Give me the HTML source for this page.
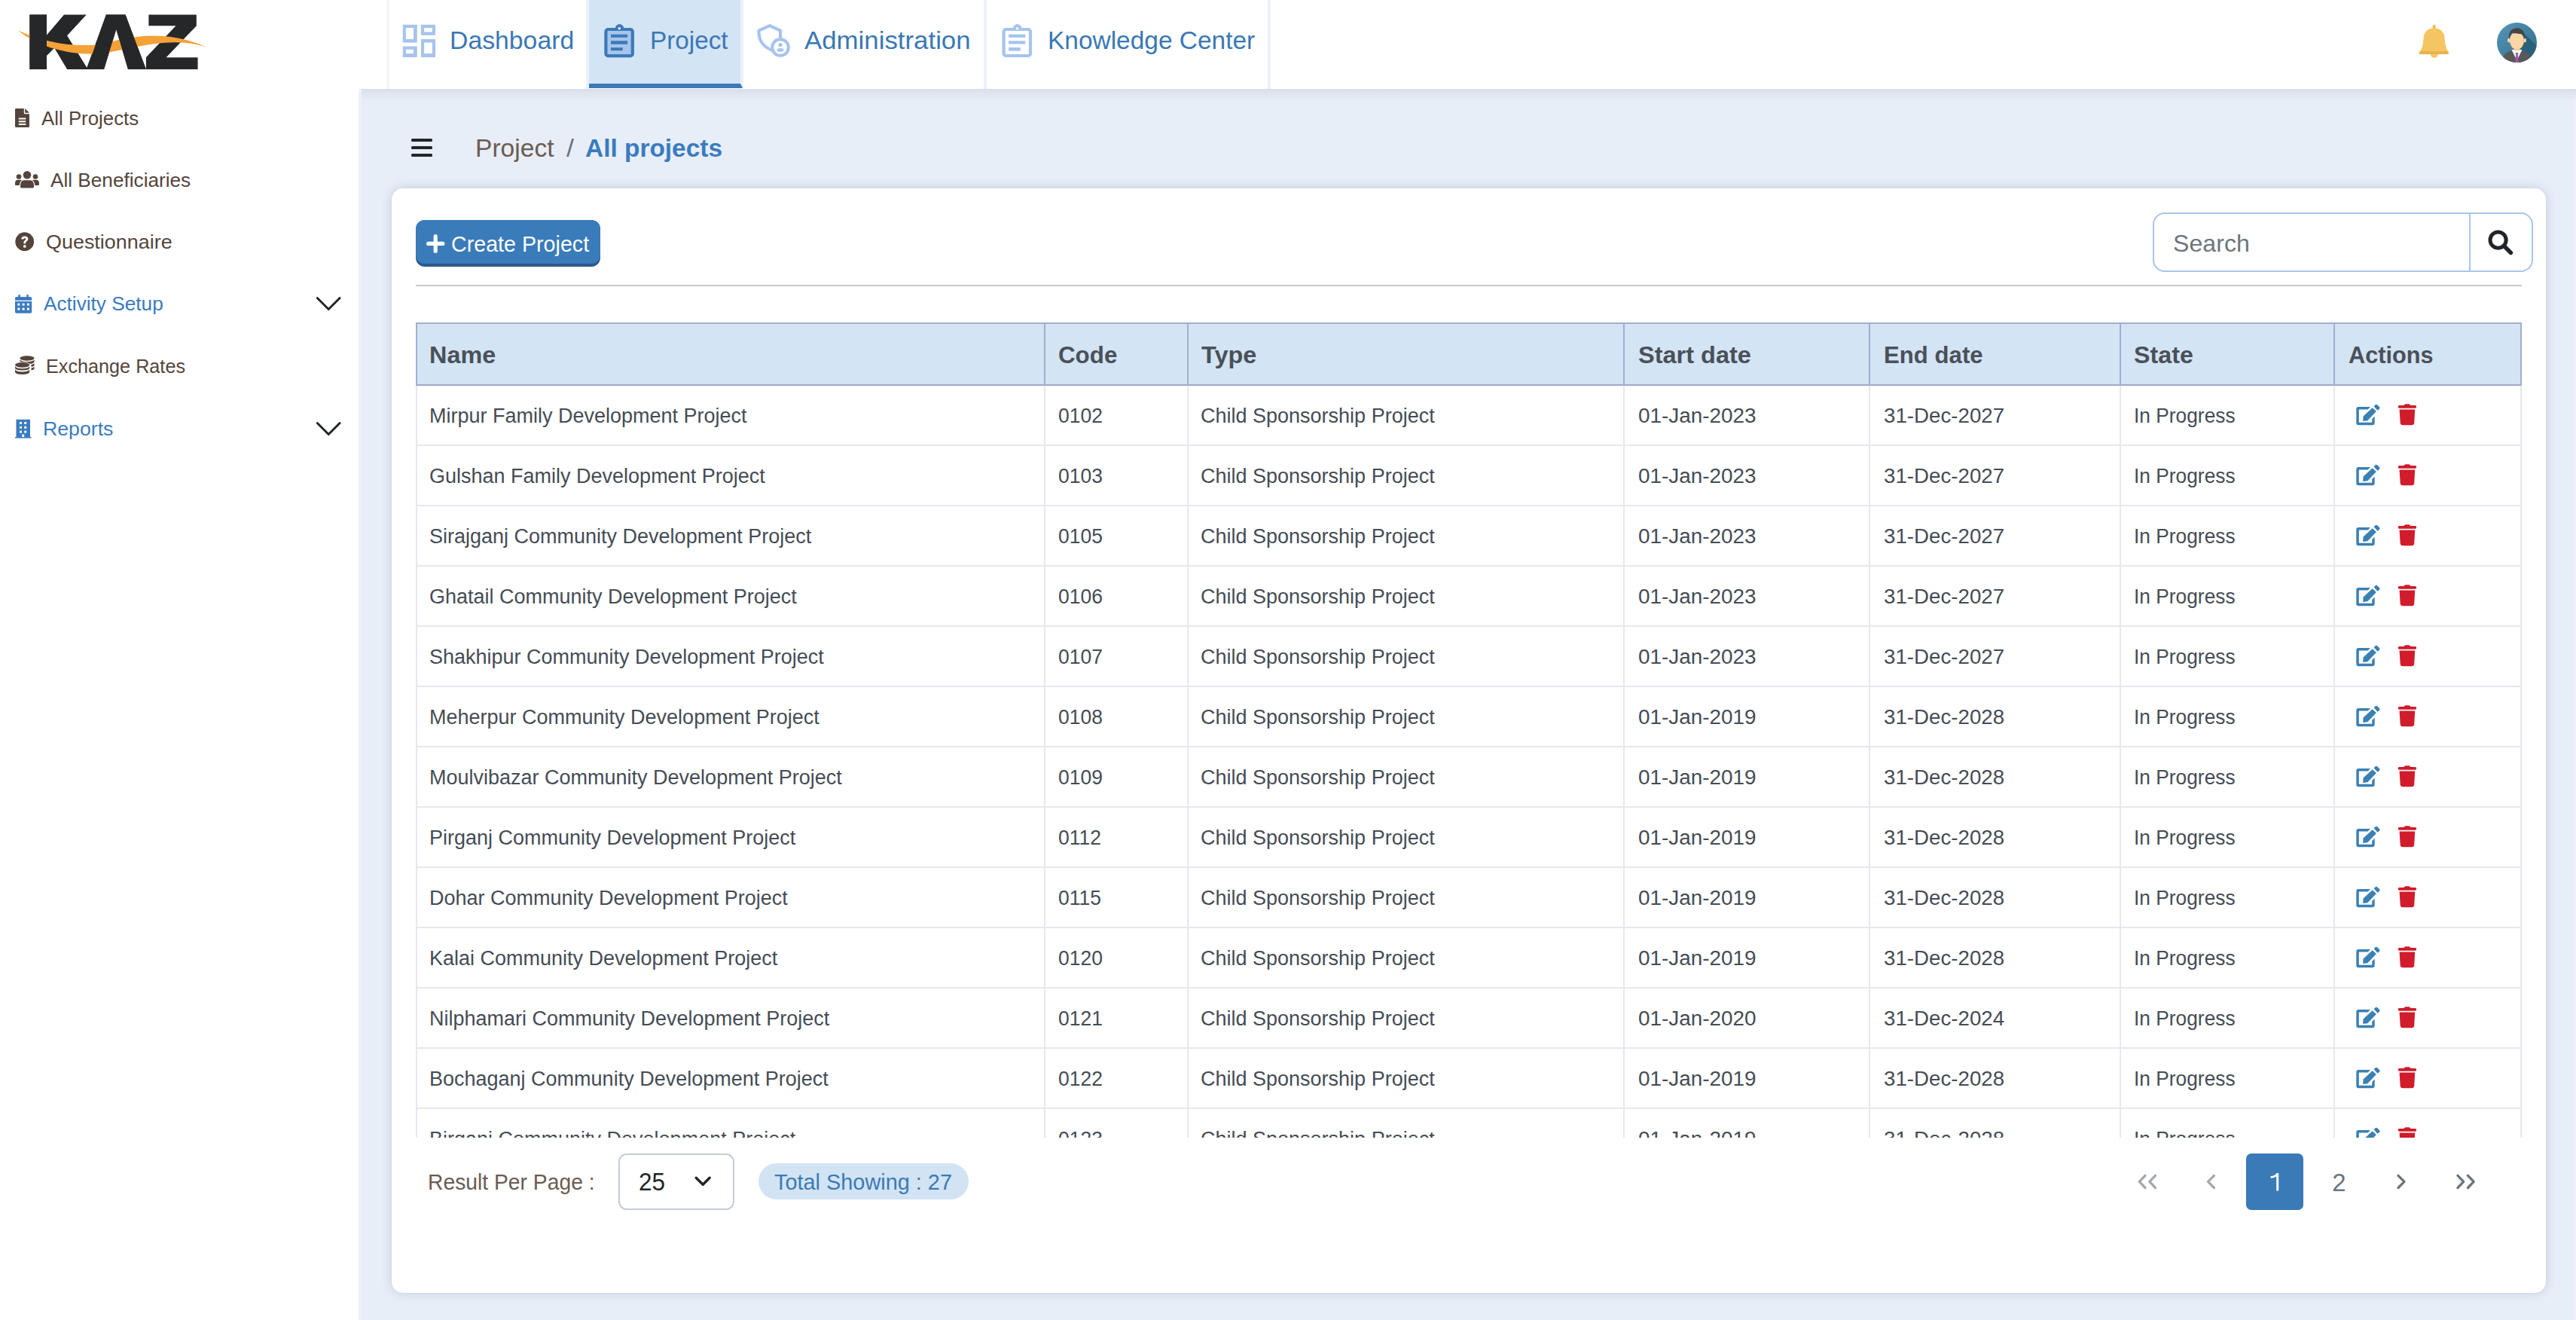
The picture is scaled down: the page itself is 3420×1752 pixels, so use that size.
<!DOCTYPE html>
<html><head><meta charset="utf-8"><title>KAZ - All projects</title>
<style>
html,body{margin:0;padding:0;}
body{width:3420px;height:1752px;overflow:hidden;position:relative;background:#e8eef8;font-family:"Liberation Sans",sans-serif;}
.a{position:absolute;}
.t{position:absolute;line-height:1;white-space:nowrap;transform-origin:0 50%;}
.ic{position:absolute;overflow:visible;}
@media (max-width:2400px){html{zoom:0.5;}}
.rowline{position:absolute;left:552px;width:2796px;height:2px;background:#e6e8ee;}
</style></head><body>
<!-- main bg + header shadow -->
<div class="a" style="left:0;top:0;width:3420px;height:118px;background:#fff;"></div>
<div class="a" style="left:3417px;top:118px;width:3px;height:1634px;background:#eef1fb;"></div>
<div class="a" style="left:480px;top:118px;width:2940px;height:16px;background:linear-gradient(#d8dee9,#dfe5ef 35%,rgba(232,238,248,0));"></div>
<!-- logo -->
<svg class="ic" style="left:0;top:0" width="300" height="110" viewBox="0 0 2576 945">
<g fill="#262729">
<path d="M338 168 H532 V400 L730 168 H985 L765 405 L990 770 L1210 168 H1430 L1665 790 H1460 L1325 335 L1185 790 H765 L620 548 L532 635 V790 H338 Z"/>
<path d="M1695 168 H2240 V295 L1895 655 H2255 V790 H1665 V655 L2005 295 H1695 Z"/>
</g>
<path fill="#f4a137" d="M205 345 C420 450 700 520 1000 515 C1150 512 1250 480 1350 455 C1550 410 1750 395 1950 420 C2100 440 2250 490 2350 535 C2200 490 2050 470 1850 490 C1650 510 1500 545 1380 570 C1250 598 1150 620 1000 615 C700 600 420 520 205 345 Z"/>
<g fill="#262729">
<path d="M338 168 H532 V790 H338 Z"/>
<path d="M990 790 L1210 168 H1325 V335 L1185 790 Z"/>
<path d="M1325 335 V168 H1430 L1665 790 H1460 Z"/>
</g>
</svg>
<!-- nav separators -->
<div class="a" style="left:514px;top:0;width:2px;height:118px;background:#eef0fb;"></div>
<div class="a" style="left:778px;top:0;width:4px;height:118px;background:#eef0fb;"></div>
<div class="a" style="left:782px;top:0;width:201px;height:111px;background:#d3e4f4;"></div>
<div class="a" style="left:983px;top:0;width:4px;height:117px;background:#eef0fb;"></div>
<div class="a" style="left:782px;top:111px;width:204px;height:6px;background:#3a7ab7;clip-path:polygon(0 0,201px 0,204px 100%,0 100%);"></div>
<div class="a" style="left:1306px;top:0;width:4px;height:118px;background:#eef0fb;"></div>
<div class="a" style="left:1683px;top:0;width:4px;height:118px;background:#eef0fb;"></div>
<!-- dashboard icon -->
<svg class="ic" style="left:534px;top:32px" width="44" height="44" viewBox="0 0 44 44"><path fill="#a6c4ec" fill-rule="evenodd" d="M0.8 0.8H19.8V24.5H0.8Z M4.9 5H15V19.9H4.9Z M25 0.8H44V14.8H25Z M29.1 5H39.9V10.6H29.1Z M0.8 29.6H19.8V43.9H0.8Z M4.9 33.8H15V39.1H4.9Z M25 20.1H44V43.9H25Z M29.1 24.5H39.9V39.1H29.1Z"/></svg>
<div class="t" style="left:596.8px;top:36.64px;font-size:33.5px;color:#3a78b5;font-weight:400;transform:scaleX(1.008);">Dashboard</div>

<!-- project icon -->
<svg class="ic" style="left:802px;top:32px" width="41" height="45" viewBox="0 0 41 45">
<rect x="2.4" y="7" width="35.4" height="35.2" rx="3" fill="#a7c5ec" stroke="#3a7ab7" stroke-width="4.2"/>
<path d="M14.8 5.8 A5.7 5.7 0 0 1 26.2 5.8 Z" fill="#3a7ab7"/>
<circle cx="20.3" cy="5.8" r="1.7" fill="#fff"/>
<rect x="9" y="13.7" width="22.1" height="4" fill="#3a7ab7"/>
<rect x="9" y="22.2" width="22.1" height="4.5" fill="#3a7ab7"/>
<rect x="9" y="31.1" width="15.7" height="4" fill="#3a7ab7"/>
</svg>
<div class="t" style="left:863.0px;top:36.64px;font-size:33.5px;color:#3a78b5;font-weight:400;transform:scaleX(0.9937);">Project</div>

<!-- admin icon -->
<svg class="ic" style="left:1004px;top:31px" width="48" height="48" viewBox="0 0 48 48">
<path d="M25.5 37.5 C12 33 3.5 26 3.5 12 V9.5 L18 3 L32 9.5 V20" fill="none" stroke="#a6c4ec" stroke-width="4.2" stroke-linejoin="miter"/>
<circle cx="32" cy="32" r="10.8" fill="#fff" stroke="#a6c4ec" stroke-width="4.2"/>
<circle cx="32" cy="28.6" r="2.7" fill="#a6c4ec"/>
<ellipse cx="32" cy="35.4" rx="4.5" ry="2.3" fill="#a6c4ec"/>
</svg>
<div class="t" style="left:1067.6px;top:36.64px;font-size:33.5px;color:#3a78b5;font-weight:400;transform:scaleX(1.0393);">Administration</div>

<!-- KC icon -->
<svg class="ic" style="left:1330px;top:32px" width="41" height="45" viewBox="0 0 41 45">
<rect x="2.6" y="7" width="35.4" height="35" rx="3" fill="none" stroke="#a6c4ec" stroke-width="4.2"/>
<path d="M14.9 5.8 A5.7 5.7 0 0 1 26.3 5.8 Z" fill="#a6c4ec"/>
<circle cx="20.6" cy="5.9" r="1.7" fill="#fff"/>
<rect x="9.1" y="13.6" width="22.1" height="4.2" fill="#a6c4ec"/>
<rect x="9.1" y="22.3" width="22.1" height="4.2" fill="#a6c4ec"/>
<rect x="9.1" y="31" width="15.7" height="4.6" fill="#a6c4ec"/>
</svg>
<div class="t" style="left:1391.2px;top:36.64px;font-size:33.5px;color:#3a78b5;font-weight:400;transform:scaleX(0.9984);">Knowledge Center</div>

<!-- bell -->
<svg class="ic" style="left:3208px;top:30px" width="48" height="50" viewBox="0 0 48 50">
<ellipse cx="23.6" cy="5.4" rx="2.1" ry="2.6" fill="#eeb94f"/>
<path d="M23.6 7.3 C31.5 7.3 37 12.5 37.6 20 C38.2 30 39.5 34 42.5 38.6 H4.7 C7.7 34 9 30 9.6 20 C10.2 12.5 15.7 7.3 23.6 7.3 Z" fill="#f4c562"/>
<rect x="3.5" y="38" width="39.5" height="4" rx="2" fill="#e8b24a"/>
<path d="M19 42 A4.8 4.8 0 0 0 28.6 42 Z" fill="#f4c562"/>
</svg>
<!-- avatar -->
<svg class="ic" style="left:3315px;top:30px" width="54" height="54" viewBox="0 0 54 54">
<defs><clipPath id="avc"><circle cx="26.5" cy="26.5" r="26.5"/></clipPath>
<linearGradient id="avg" x1="0" y1="0" x2="1" y2="1"><stop offset="0" stop-color="#5596b8"/><stop offset="1" stop-color="#2f6a86"/></linearGradient></defs>
<g clip-path="url(#avc)">
<rect width="54" height="54" fill="url(#avg)"/>
<path d="M30 8 L60 38 V60 H26 Z" fill="#285d76" opacity="0.85"/>
<path d="M5 56 C6 44 12 40 19 37 L26.5 36 L34 37 C41 40 47 44 48 56 Z" fill="#585858"/>
<path d="M19.5 36 H33.5 L26.5 50 Z" fill="#ffffff"/>
<path d="M24.6 40 H28.4 L27.8 43 L29 56 H24 L25.2 43 Z" fill="#a556a9"/>
<rect x="22.5" y="30" width="8" height="7" fill="#f6c693"/>
<ellipse cx="15.8" cy="23.5" rx="1.8" ry="2.8" fill="#fcd5a5"/>
<ellipse cx="37.2" cy="23.5" rx="1.8" ry="2.8" fill="#fcd5a5"/>
<ellipse cx="26.5" cy="24" rx="9.6" ry="11.6" fill="#fcd5a5"/>
<path d="M16 22 C15 12 20 7.3 26.5 7.3 C33 7.3 38 12 37 22 C36 17 34 15.5 31 15 C27 14.5 23 15 20.5 13.5 C18.5 15 17 18 16 22 Z" fill="#454545"/>
</g>
</svg>

<div class="a" style="left:0;top:118px;width:476px;height:1634px;background:#fff;"></div>
<div class="a" style="left:476px;top:118px;width:4px;height:1634px;background:#eef0fb;"></div>
<!-- file icon -->
<svg class="ic" style="left:20px;top:144px" width="19" height="25" viewBox="0 0 19 25">
<path d="M0 1.2 Q0 0 1.2 0 H11.8 V6 Q11.8 7.2 13 7.2 H19 V23.8 Q19 25 17.8 25 H1.2 Q0 25 0 23.8 Z" fill="#54443c"/>
<path d="M13.2 0 L19 5.8 H13.2 Z" fill="#54443c"/>
<rect x="4.8" y="12.5" width="9.4" height="2" fill="#fff"/>
<rect x="4.8" y="16.3" width="9.4" height="2" fill="#fff"/>
<rect x="4.8" y="20" width="9.4" height="2" fill="#fff"/>
</svg>
<div class="t" style="left:54.6px;top:143.99px;font-size:26px;color:#54443c;font-weight:400;transform:scaleX(0.9934);">All Projects</div>

<!-- users icon -->
<svg class="ic" style="left:20px;top:227px" width="32" height="23" viewBox="0 0 32 23">
<circle cx="16" cy="5.3" r="5.3" fill="#54443c"/>
<path d="M7 20 Q7 12.5 12 12.2 H20 Q25 12.5 25 20 V21 Q25 22.6 23.4 22.6 H8.6 Q7 22.6 7 21 Z" fill="#54443c"/>
<circle cx="5" cy="7.5" r="3.3" fill="#54443c"/>
<circle cx="27" cy="7.5" r="3.3" fill="#54443c"/>
<path d="M0 16.5 Q0 11.8 3.5 11.8 H7.5 Q8.5 11.8 9 12.3 Q6 14.5 5.8 19 H1.2 Q0 19 0 17.8 Z" fill="#54443c"/>
<path d="M32 16.5 Q32 11.8 28.5 11.8 H24.5 Q23.5 11.8 23 12.3 Q26 14.5 26.2 19 H30.8 Q32 19 32 17.8 Z" fill="#54443c"/>
</svg>
<div class="t" style="left:67.1px;top:225.69px;font-size:26px;color:#54443c;font-weight:400;transform:scaleX(1.0067);">All Beneficiaries</div>

<!-- question icon -->
<svg class="ic" style="left:20px;top:308px" width="26" height="26" viewBox="0 0 26 26">
<circle cx="12.7" cy="12.7" r="12.4" fill="#54443c"/>
<path d="M8.3 9.6 Q8.6 5.6 12.9 5.6 Q17.3 5.6 17.3 9.3 Q17.3 11.6 15 12.8 Q14.2 13.3 14.2 14.5 V15.2 H11.3 V14.2 Q11.3 11.8 13 10.9 Q14.3 10.2 14.3 9.4 Q14.3 8.2 12.9 8.2 Q11.6 8.2 11.2 9.6 Z" fill="#fff"/>
<circle cx="12.8" cy="18.9" r="1.9" fill="#fff"/>
</svg>
<div class="t" style="left:61.0px;top:307.99px;font-size:26px;color:#54443c;font-weight:400;transform:scaleX(1.0354);">Questionnaire</div>

<!-- calendar icon -->
<svg class="ic" style="left:20px;top:391px" width="23" height="25" viewBox="0 0 23 25">
<rect x="4.3" y="0" width="2.6" height="5" rx="1" fill="#3a7bbf"/>
<rect x="15.3" y="0" width="2.6" height="5" rx="1" fill="#3a7bbf"/>
<path d="M0 4.8 Q0 3 1.8 3 H20.4 Q22.2 3 22.2 4.8 V7.8 H0 Z" fill="#3a7bbf"/>
<path d="M0 9 H22.2 V23 Q22.2 24.8 20.4 24.8 H1.8 Q0 24.8 0 23 Z" fill="#3a7bbf"/>
<g fill="#fff"><rect x="3.3" y="11.6" width="3" height="3"/><rect x="9.6" y="11.6" width="3" height="3"/><rect x="15.9" y="11.6" width="3" height="3"/><rect x="3.3" y="17.6" width="3" height="3"/><rect x="9.6" y="17.6" width="3" height="3"/><rect x="15.9" y="17.6" width="3" height="3"/></g>
</svg>
<div class="t" style="left:58.0px;top:390.49px;font-size:26px;color:#3a7bbf;font-weight:400;transform:scaleX(1.0076);">Activity Setup</div>

<svg class="ic" style="left:419px;top:393px" width="35" height="21" viewBox="0 0 35 21"><path d="M1.5 1.8 L17.2 17.5 L32.9 1.8" fill="none" stroke="#212529" stroke-width="3"/></svg>
<!-- coins icon -->
<svg class="ic" style="left:20px;top:472px" width="26" height="26" viewBox="0 0 26 26">
<g fill="#54443c">
<ellipse cx="16" cy="3.5" rx="9.6" ry="3.3"/>
<path d="M6.4 5.2 Q8 8 16 8 Q24 8 25.6 5.2 V7.8 Q25.6 10.2 20 10.9 Q17 8.6 11 8.5 Q7 8.5 6.4 7.8 Z"/>
<path d="M21.5 12 Q25.6 11.2 25.6 9.6 V12.6 Q25.6 14.4 21.5 15 Z"/>
<path d="M21.5 16.5 Q25.6 15.8 25.6 14.3 V17 Q25.6 18.8 21.5 19.4 Z"/>
<ellipse cx="9.6" cy="12.4" rx="9.6" ry="3.4"/>
<path d="M0 14.2 Q1.6 17.2 9.6 17.2 Q17.6 17.2 19.2 14.2 V16.6 Q19.2 19.6 9.6 19.6 Q0 19.6 0 16.6 Z"/>
<path d="M0 18.6 Q1.6 21.6 9.6 21.6 Q17.6 21.6 19.2 18.6 V21.6 Q19.2 25 9.6 25 Q0 25 0 21.6 Z"/>
</g>
</svg>
<div class="t" style="left:61.0px;top:472.69px;font-size:26px;color:#54443c;font-weight:400;transform:scaleX(0.9697);">Exchange Rates</div>

<!-- building icon -->
<svg class="ic" style="left:20px;top:556px" width="22" height="26" viewBox="0 0 22 26">
<path d="M1.5 0.8 H20 V24 H21.6 V25.6 H0 V24 H1.5 Z" fill="#3a7bbf"/>
<g fill="#fff"><rect x="6" y="4" width="3" height="3"/><rect x="12.2" y="4" width="3" height="3"/><rect x="6" y="9.8" width="3" height="3"/><rect x="12.2" y="9.8" width="3" height="3"/><rect x="6" y="15.6" width="3" height="3"/><rect x="12.2" y="15.6" width="3" height="3"/><rect x="9.2" y="20.6" width="3" height="3.4"/></g>
</svg>
<div class="t" style="left:56.6px;top:556.19px;font-size:26px;color:#3a7bbf;font-weight:400;transform:scaleX(1.0261);">Reports</div>

<svg class="ic" style="left:419px;top:559px" width="35" height="21" viewBox="0 0 35 21"><path d="M1.5 1.8 L17.2 17.5 L32.9 1.8" fill="none" stroke="#212529" stroke-width="3"/></svg>

<!-- hamburger -->
<div class="a" style="left:546px;top:183.6px;width:28px;height:4.6px;border-radius:1.5px;background:#212529;"></div>
<div class="a" style="left:546px;top:193.9px;width:28px;height:4.6px;border-radius:1.5px;background:#212529;"></div>
<div class="a" style="left:546px;top:203.7px;width:28px;height:4.6px;border-radius:1.5px;background:#212529;"></div>
<div class="t" style="left:631.0px;top:180.47px;font-size:33px;color:#6b5b53;font-weight:400;transform:scaleX(1.0185);">Project</div>

<div class="t" style="left:751.7px;top:180.47px;font-size:33px;color:#6c757d;font-weight:400;transform:scaleX(1.09);">/</div>

<div class="t" style="left:777.0px;top:180.47px;font-size:33px;color:#3a7bbf;font-weight:700;transform:scaleX(1.0127);">All projects</div>


<div class="a" style="left:520px;top:250px;width:2860px;height:1466px;background:#fff;border-radius:15px;box-shadow:0 0 13px rgba(125,140,170,0.38);"></div>
<!-- create button -->
<div class="a" style="left:552px;top:292px;width:245px;height:62px;border-radius:12px;background:#2b5a8a;"></div>
<div class="a" style="left:552px;top:292px;width:245px;height:58px;border-radius:12px;background:#3a7bb9;"></div>
<svg class="ic" style="left:566px;top:311px" width="25" height="25" viewBox="0 0 25 25"><path d="M12.2 2.6 V22.2 M2.6 12.4 H21.8" stroke="#fff" stroke-width="5.2" stroke-linecap="round"/></svg>
<div class="t" style="left:599.2px;top:309.65px;font-size:29px;color:#ffffff;font-weight:400;transform:scaleX(0.9878);">Create Project</div>

<div class="a" style="left:552px;top:378px;width:2796px;height:2px;background:#c9c9c9;"></div>
<!-- search -->
<div class="a" style="left:2858px;top:282px;width:501px;height:75px;border:2px solid #a7c5ec;border-radius:16px;"></div>
<div class="a" style="left:3278px;top:283px;width:2px;height:77px;background:#a7c5ec;"></div>
<div class="t" style="left:2884.6px;top:306.91px;font-size:32px;color:#6c757d;font-weight:400;transform:scaleX(1.0042);">Search</div>

<svg class="ic" style="left:3303px;top:305px" width="34" height="34" viewBox="0 0 34 34"><circle cx="13.6" cy="13.6" r="10.6" fill="none" stroke="#212529" stroke-width="5"/><path d="M21.5 21.5 L30.5 30.5" stroke="#212529" stroke-width="5.4" stroke-linecap="round"/></svg>

<div class="a" id="tablewrap" style="left:552px;top:428px;width:2796px;height:1082px;overflow:hidden;">
<div class="a" style="left:0;top:0;width:2796px;height:1082px;">
<div class="a" style="left:0;top:0;width:2796px;height:84px;background:#d3e4f4;"></div>
<div class="a" style="left:0;top:0;width:2796px;height:2px;background:#a2aed0;"></div>
<div class="a" style="left:0;top:82px;width:2796px;height:1px;background:#a3afd2;"></div><div class="a" style="left:0;top:83px;width:2796px;height:1px;background:#97a2b9;"></div>
<div class="a" style="left:0;top:0;width:2px;height:1082px;background:#a2aed0;"></div>
<div class="a" style="left:2794px;top:0;width:2px;height:1082px;background:#a2aed0;"></div>
<div class="a" style="left:834px;top:84px;width:2px;height:998px;background:#e6e8ee;"></div><div class="a" style="left:834px;top:0;width:2px;height:84px;background:#a2aed0;"></div><div class="a" style="left:1024px;top:84px;width:2px;height:998px;background:#e6e8ee;"></div><div class="a" style="left:1024px;top:0;width:2px;height:84px;background:#a2aed0;"></div><div class="a" style="left:1603px;top:84px;width:2px;height:998px;background:#e6e8ee;"></div><div class="a" style="left:1603px;top:0;width:2px;height:84px;background:#a2aed0;"></div><div class="a" style="left:1929px;top:84px;width:2px;height:998px;background:#e6e8ee;"></div><div class="a" style="left:1929px;top:0;width:2px;height:84px;background:#a2aed0;"></div><div class="a" style="left:2262px;top:84px;width:2px;height:998px;background:#e6e8ee;"></div><div class="a" style="left:2262px;top:0;width:2px;height:84px;background:#a2aed0;"></div><div class="a" style="left:2546px;top:84px;width:2px;height:998px;background:#e6e8ee;"></div><div class="a" style="left:2546px;top:0;width:2px;height:84px;background:#a2aed0;"></div>
<div class="a" style="left:0;top:84px;width:2px;height:998px;background:#e6e8ee;"></div>
<div class="a" style="left:2794px;top:84px;width:2px;height:998px;background:#e6e8ee;"></div>
<div class="a" style="left:-552px;top:-428px;width:3420px;height:1752px;">
<div class="t" style="left:570.4px;top:455.11px;font-size:32px;color:#4a5059;font-weight:700;transform:scaleX(1.0118);">Name</div>

<div class="t" style="left:1405.0px;top:455.11px;font-size:32px;color:#4a5059;font-weight:700;transform:scaleX(0.9787);">Code</div>

<div class="t" style="left:1594.8px;top:455.11px;font-size:32px;color:#4a5059;font-weight:700;transform:scaleX(1.0149);">Type</div>

<div class="t" style="left:2174.5px;top:455.11px;font-size:32px;color:#4a5059;font-weight:700;transform:scaleX(1.0157);">Start date</div>

<div class="t" style="left:2500.6px;top:455.11px;font-size:32px;color:#4a5059;font-weight:700;transform:scaleX(0.9738);">End date</div>

<div class="t" style="left:2833.4px;top:455.11px;font-size:32px;color:#4a5059;font-weight:700;transform:scaleX(1.0072);">State</div>

<div class="t" style="left:3117.5px;top:455.11px;font-size:32px;color:#4a5059;font-weight:700;transform:scaleX(0.9604);">Actions</div>

</div>

</div>
<div class="a" style="left:-552px;top:-428px;width:3420px;height:1752px;">
<div class="rowline" style="top:590px"></div>
<div class="t" style="left:570.0px;top:539.14px;font-size:27px;color:#454c55;font-weight:400;">Mirpur Family Development Project</div>
<div class="t" style="left:1405px;top:539.14px;font-size:27px;color:#454c55;font-weight:400;transform:scaleX(0.98);">0102</div>
<div class="t" style="left:1594px;top:539.14px;font-size:27px;color:#454c55;font-weight:400;">Child Sponsorship Project</div>
<div class="t" style="left:2174.5px;top:539.14px;font-size:27px;color:#454c55;font-weight:400;transform:scaleX(1.033);">01-Jan-2023</div>
<div class="t" style="left:2500.5px;top:539.14px;font-size:27px;color:#454c55;font-weight:400;transform:scaleX(1.026);">31-Dec-2027</div>
<div class="t" style="left:2832.5px;top:539.14px;font-size:27px;color:#454c55;font-weight:400;transform:scaleX(0.975);">In Progress</div>
<svg class="ic" style="left:3127px;top:535px" width="34" height="30" viewBox="0 0 34 30"><path d="M4.3 5.1 H20 L16.6 8.6 H4.8 V25.8 H22.2 V21 L25.7 17.6 V26.3 Q25.7 29.3 22.7 29.3 H4.3 Q1.3 29.3 1.3 26.3 V8.1 Q1.3 5.1 4.3 5.1 Z" fill="#3a80b3"/><path d="M10.5 17.6 L22.7 6.2 L27.9 11.1 L16.2 23.3 L10.2 23.9 Z" fill="#3a80b3"/><path d="M24.6 4.3 L26.4 2.5 Q27.9 1.2 29.4 2.5 L32 5 Q33.3 6.4 32 7.8 L29.5 9.7 Z" fill="#3a80b3"/></svg>
<svg class="ic" style="left:3183px;top:535px" width="26" height="30" viewBox="0 0 26 30"><path d="M8.3 3 Q9.3 1.3 11 1.3 H15 Q16.7 1.3 17.6 3 H23.5 Q25.2 3 25.2 4.8 Q25.2 6.7 23.5 6.7 H2.4 Q0.7 6.7 0.7 4.8 Q0.7 3 2.4 3 Z" fill="#d01c2b"/><path d="M2.6 8.4 H23.2 L22.2 26.3 Q21.9 29.3 18.9 29.3 H7 Q4 29.3 3.7 26.3 Z" fill="#d01c2b"/></svg>
<div class="rowline" style="top:670px"></div>
<div class="t" style="left:570.0px;top:619.14px;font-size:27px;color:#454c55;font-weight:400;">Gulshan Family Development Project</div>
<div class="t" style="left:1405px;top:619.14px;font-size:27px;color:#454c55;font-weight:400;transform:scaleX(0.98);">0103</div>
<div class="t" style="left:1594px;top:619.14px;font-size:27px;color:#454c55;font-weight:400;">Child Sponsorship Project</div>
<div class="t" style="left:2174.5px;top:619.14px;font-size:27px;color:#454c55;font-weight:400;transform:scaleX(1.033);">01-Jan-2023</div>
<div class="t" style="left:2500.5px;top:619.14px;font-size:27px;color:#454c55;font-weight:400;transform:scaleX(1.026);">31-Dec-2027</div>
<div class="t" style="left:2832.5px;top:619.14px;font-size:27px;color:#454c55;font-weight:400;transform:scaleX(0.975);">In Progress</div>
<svg class="ic" style="left:3127px;top:615px" width="34" height="30" viewBox="0 0 34 30"><path d="M4.3 5.1 H20 L16.6 8.6 H4.8 V25.8 H22.2 V21 L25.7 17.6 V26.3 Q25.7 29.3 22.7 29.3 H4.3 Q1.3 29.3 1.3 26.3 V8.1 Q1.3 5.1 4.3 5.1 Z" fill="#3a80b3"/><path d="M10.5 17.6 L22.7 6.2 L27.9 11.1 L16.2 23.3 L10.2 23.9 Z" fill="#3a80b3"/><path d="M24.6 4.3 L26.4 2.5 Q27.9 1.2 29.4 2.5 L32 5 Q33.3 6.4 32 7.8 L29.5 9.7 Z" fill="#3a80b3"/></svg>
<svg class="ic" style="left:3183px;top:615px" width="26" height="30" viewBox="0 0 26 30"><path d="M8.3 3 Q9.3 1.3 11 1.3 H15 Q16.7 1.3 17.6 3 H23.5 Q25.2 3 25.2 4.8 Q25.2 6.7 23.5 6.7 H2.4 Q0.7 6.7 0.7 4.8 Q0.7 3 2.4 3 Z" fill="#d01c2b"/><path d="M2.6 8.4 H23.2 L22.2 26.3 Q21.9 29.3 18.9 29.3 H7 Q4 29.3 3.7 26.3 Z" fill="#d01c2b"/></svg>
<div class="rowline" style="top:750px"></div>
<div class="t" style="left:570.0px;top:699.14px;font-size:27px;color:#454c55;font-weight:400;">Sirajganj Community Development Project</div>
<div class="t" style="left:1405px;top:699.14px;font-size:27px;color:#454c55;font-weight:400;transform:scaleX(0.98);">0105</div>
<div class="t" style="left:1594px;top:699.14px;font-size:27px;color:#454c55;font-weight:400;">Child Sponsorship Project</div>
<div class="t" style="left:2174.5px;top:699.14px;font-size:27px;color:#454c55;font-weight:400;transform:scaleX(1.033);">01-Jan-2023</div>
<div class="t" style="left:2500.5px;top:699.14px;font-size:27px;color:#454c55;font-weight:400;transform:scaleX(1.026);">31-Dec-2027</div>
<div class="t" style="left:2832.5px;top:699.14px;font-size:27px;color:#454c55;font-weight:400;transform:scaleX(0.975);">In Progress</div>
<svg class="ic" style="left:3127px;top:695px" width="34" height="30" viewBox="0 0 34 30"><path d="M4.3 5.1 H20 L16.6 8.6 H4.8 V25.8 H22.2 V21 L25.7 17.6 V26.3 Q25.7 29.3 22.7 29.3 H4.3 Q1.3 29.3 1.3 26.3 V8.1 Q1.3 5.1 4.3 5.1 Z" fill="#3a80b3"/><path d="M10.5 17.6 L22.7 6.2 L27.9 11.1 L16.2 23.3 L10.2 23.9 Z" fill="#3a80b3"/><path d="M24.6 4.3 L26.4 2.5 Q27.9 1.2 29.4 2.5 L32 5 Q33.3 6.4 32 7.8 L29.5 9.7 Z" fill="#3a80b3"/></svg>
<svg class="ic" style="left:3183px;top:695px" width="26" height="30" viewBox="0 0 26 30"><path d="M8.3 3 Q9.3 1.3 11 1.3 H15 Q16.7 1.3 17.6 3 H23.5 Q25.2 3 25.2 4.8 Q25.2 6.7 23.5 6.7 H2.4 Q0.7 6.7 0.7 4.8 Q0.7 3 2.4 3 Z" fill="#d01c2b"/><path d="M2.6 8.4 H23.2 L22.2 26.3 Q21.9 29.3 18.9 29.3 H7 Q4 29.3 3.7 26.3 Z" fill="#d01c2b"/></svg>
<div class="rowline" style="top:830px"></div>
<div class="t" style="left:570.0px;top:779.14px;font-size:27px;color:#454c55;font-weight:400;">Ghatail Community Development Project</div>
<div class="t" style="left:1405px;top:779.14px;font-size:27px;color:#454c55;font-weight:400;transform:scaleX(0.98);">0106</div>
<div class="t" style="left:1594px;top:779.14px;font-size:27px;color:#454c55;font-weight:400;">Child Sponsorship Project</div>
<div class="t" style="left:2174.5px;top:779.14px;font-size:27px;color:#454c55;font-weight:400;transform:scaleX(1.033);">01-Jan-2023</div>
<div class="t" style="left:2500.5px;top:779.14px;font-size:27px;color:#454c55;font-weight:400;transform:scaleX(1.026);">31-Dec-2027</div>
<div class="t" style="left:2832.5px;top:779.14px;font-size:27px;color:#454c55;font-weight:400;transform:scaleX(0.975);">In Progress</div>
<svg class="ic" style="left:3127px;top:775px" width="34" height="30" viewBox="0 0 34 30"><path d="M4.3 5.1 H20 L16.6 8.6 H4.8 V25.8 H22.2 V21 L25.7 17.6 V26.3 Q25.7 29.3 22.7 29.3 H4.3 Q1.3 29.3 1.3 26.3 V8.1 Q1.3 5.1 4.3 5.1 Z" fill="#3a80b3"/><path d="M10.5 17.6 L22.7 6.2 L27.9 11.1 L16.2 23.3 L10.2 23.9 Z" fill="#3a80b3"/><path d="M24.6 4.3 L26.4 2.5 Q27.9 1.2 29.4 2.5 L32 5 Q33.3 6.4 32 7.8 L29.5 9.7 Z" fill="#3a80b3"/></svg>
<svg class="ic" style="left:3183px;top:775px" width="26" height="30" viewBox="0 0 26 30"><path d="M8.3 3 Q9.3 1.3 11 1.3 H15 Q16.7 1.3 17.6 3 H23.5 Q25.2 3 25.2 4.8 Q25.2 6.7 23.5 6.7 H2.4 Q0.7 6.7 0.7 4.8 Q0.7 3 2.4 3 Z" fill="#d01c2b"/><path d="M2.6 8.4 H23.2 L22.2 26.3 Q21.9 29.3 18.9 29.3 H7 Q4 29.3 3.7 26.3 Z" fill="#d01c2b"/></svg>
<div class="rowline" style="top:910px"></div>
<div class="t" style="left:570.0px;top:859.14px;font-size:27px;color:#454c55;font-weight:400;">Shakhipur Community Development Project</div>
<div class="t" style="left:1405px;top:859.14px;font-size:27px;color:#454c55;font-weight:400;transform:scaleX(0.98);">0107</div>
<div class="t" style="left:1594px;top:859.14px;font-size:27px;color:#454c55;font-weight:400;">Child Sponsorship Project</div>
<div class="t" style="left:2174.5px;top:859.14px;font-size:27px;color:#454c55;font-weight:400;transform:scaleX(1.033);">01-Jan-2023</div>
<div class="t" style="left:2500.5px;top:859.14px;font-size:27px;color:#454c55;font-weight:400;transform:scaleX(1.026);">31-Dec-2027</div>
<div class="t" style="left:2832.5px;top:859.14px;font-size:27px;color:#454c55;font-weight:400;transform:scaleX(0.975);">In Progress</div>
<svg class="ic" style="left:3127px;top:855px" width="34" height="30" viewBox="0 0 34 30"><path d="M4.3 5.1 H20 L16.6 8.6 H4.8 V25.8 H22.2 V21 L25.7 17.6 V26.3 Q25.7 29.3 22.7 29.3 H4.3 Q1.3 29.3 1.3 26.3 V8.1 Q1.3 5.1 4.3 5.1 Z" fill="#3a80b3"/><path d="M10.5 17.6 L22.7 6.2 L27.9 11.1 L16.2 23.3 L10.2 23.9 Z" fill="#3a80b3"/><path d="M24.6 4.3 L26.4 2.5 Q27.9 1.2 29.4 2.5 L32 5 Q33.3 6.4 32 7.8 L29.5 9.7 Z" fill="#3a80b3"/></svg>
<svg class="ic" style="left:3183px;top:855px" width="26" height="30" viewBox="0 0 26 30"><path d="M8.3 3 Q9.3 1.3 11 1.3 H15 Q16.7 1.3 17.6 3 H23.5 Q25.2 3 25.2 4.8 Q25.2 6.7 23.5 6.7 H2.4 Q0.7 6.7 0.7 4.8 Q0.7 3 2.4 3 Z" fill="#d01c2b"/><path d="M2.6 8.4 H23.2 L22.2 26.3 Q21.9 29.3 18.9 29.3 H7 Q4 29.3 3.7 26.3 Z" fill="#d01c2b"/></svg>
<div class="rowline" style="top:990px"></div>
<div class="t" style="left:570.0px;top:939.14px;font-size:27px;color:#454c55;font-weight:400;">Meherpur Community Development Project</div>
<div class="t" style="left:1405px;top:939.14px;font-size:27px;color:#454c55;font-weight:400;transform:scaleX(0.98);">0108</div>
<div class="t" style="left:1594px;top:939.14px;font-size:27px;color:#454c55;font-weight:400;">Child Sponsorship Project</div>
<div class="t" style="left:2174.5px;top:939.14px;font-size:27px;color:#454c55;font-weight:400;transform:scaleX(1.033);">01-Jan-2019</div>
<div class="t" style="left:2500.5px;top:939.14px;font-size:27px;color:#454c55;font-weight:400;transform:scaleX(1.026);">31-Dec-2028</div>
<div class="t" style="left:2832.5px;top:939.14px;font-size:27px;color:#454c55;font-weight:400;transform:scaleX(0.975);">In Progress</div>
<svg class="ic" style="left:3127px;top:935px" width="34" height="30" viewBox="0 0 34 30"><path d="M4.3 5.1 H20 L16.6 8.6 H4.8 V25.8 H22.2 V21 L25.7 17.6 V26.3 Q25.7 29.3 22.7 29.3 H4.3 Q1.3 29.3 1.3 26.3 V8.1 Q1.3 5.1 4.3 5.1 Z" fill="#3a80b3"/><path d="M10.5 17.6 L22.7 6.2 L27.9 11.1 L16.2 23.3 L10.2 23.9 Z" fill="#3a80b3"/><path d="M24.6 4.3 L26.4 2.5 Q27.9 1.2 29.4 2.5 L32 5 Q33.3 6.4 32 7.8 L29.5 9.7 Z" fill="#3a80b3"/></svg>
<svg class="ic" style="left:3183px;top:935px" width="26" height="30" viewBox="0 0 26 30"><path d="M8.3 3 Q9.3 1.3 11 1.3 H15 Q16.7 1.3 17.6 3 H23.5 Q25.2 3 25.2 4.8 Q25.2 6.7 23.5 6.7 H2.4 Q0.7 6.7 0.7 4.8 Q0.7 3 2.4 3 Z" fill="#d01c2b"/><path d="M2.6 8.4 H23.2 L22.2 26.3 Q21.9 29.3 18.9 29.3 H7 Q4 29.3 3.7 26.3 Z" fill="#d01c2b"/></svg>
<div class="rowline" style="top:1070px"></div>
<div class="t" style="left:570.0px;top:1019.14px;font-size:27px;color:#454c55;font-weight:400;">Moulvibazar Community Development Project</div>
<div class="t" style="left:1405px;top:1019.14px;font-size:27px;color:#454c55;font-weight:400;transform:scaleX(0.98);">0109</div>
<div class="t" style="left:1594px;top:1019.14px;font-size:27px;color:#454c55;font-weight:400;">Child Sponsorship Project</div>
<div class="t" style="left:2174.5px;top:1019.14px;font-size:27px;color:#454c55;font-weight:400;transform:scaleX(1.033);">01-Jan-2019</div>
<div class="t" style="left:2500.5px;top:1019.14px;font-size:27px;color:#454c55;font-weight:400;transform:scaleX(1.026);">31-Dec-2028</div>
<div class="t" style="left:2832.5px;top:1019.14px;font-size:27px;color:#454c55;font-weight:400;transform:scaleX(0.975);">In Progress</div>
<svg class="ic" style="left:3127px;top:1015px" width="34" height="30" viewBox="0 0 34 30"><path d="M4.3 5.1 H20 L16.6 8.6 H4.8 V25.8 H22.2 V21 L25.7 17.6 V26.3 Q25.7 29.3 22.7 29.3 H4.3 Q1.3 29.3 1.3 26.3 V8.1 Q1.3 5.1 4.3 5.1 Z" fill="#3a80b3"/><path d="M10.5 17.6 L22.7 6.2 L27.9 11.1 L16.2 23.3 L10.2 23.9 Z" fill="#3a80b3"/><path d="M24.6 4.3 L26.4 2.5 Q27.9 1.2 29.4 2.5 L32 5 Q33.3 6.4 32 7.8 L29.5 9.7 Z" fill="#3a80b3"/></svg>
<svg class="ic" style="left:3183px;top:1015px" width="26" height="30" viewBox="0 0 26 30"><path d="M8.3 3 Q9.3 1.3 11 1.3 H15 Q16.7 1.3 17.6 3 H23.5 Q25.2 3 25.2 4.8 Q25.2 6.7 23.5 6.7 H2.4 Q0.7 6.7 0.7 4.8 Q0.7 3 2.4 3 Z" fill="#d01c2b"/><path d="M2.6 8.4 H23.2 L22.2 26.3 Q21.9 29.3 18.9 29.3 H7 Q4 29.3 3.7 26.3 Z" fill="#d01c2b"/></svg>
<div class="rowline" style="top:1150px"></div>
<div class="t" style="left:570.0px;top:1099.14px;font-size:27px;color:#454c55;font-weight:400;">Pirganj Community Development Project</div>
<div class="t" style="left:1405px;top:1099.14px;font-size:27px;color:#454c55;font-weight:400;transform:scaleX(0.98);">0112</div>
<div class="t" style="left:1594px;top:1099.14px;font-size:27px;color:#454c55;font-weight:400;">Child Sponsorship Project</div>
<div class="t" style="left:2174.5px;top:1099.14px;font-size:27px;color:#454c55;font-weight:400;transform:scaleX(1.033);">01-Jan-2019</div>
<div class="t" style="left:2500.5px;top:1099.14px;font-size:27px;color:#454c55;font-weight:400;transform:scaleX(1.026);">31-Dec-2028</div>
<div class="t" style="left:2832.5px;top:1099.14px;font-size:27px;color:#454c55;font-weight:400;transform:scaleX(0.975);">In Progress</div>
<svg class="ic" style="left:3127px;top:1095px" width="34" height="30" viewBox="0 0 34 30"><path d="M4.3 5.1 H20 L16.6 8.6 H4.8 V25.8 H22.2 V21 L25.7 17.6 V26.3 Q25.7 29.3 22.7 29.3 H4.3 Q1.3 29.3 1.3 26.3 V8.1 Q1.3 5.1 4.3 5.1 Z" fill="#3a80b3"/><path d="M10.5 17.6 L22.7 6.2 L27.9 11.1 L16.2 23.3 L10.2 23.9 Z" fill="#3a80b3"/><path d="M24.6 4.3 L26.4 2.5 Q27.9 1.2 29.4 2.5 L32 5 Q33.3 6.4 32 7.8 L29.5 9.7 Z" fill="#3a80b3"/></svg>
<svg class="ic" style="left:3183px;top:1095px" width="26" height="30" viewBox="0 0 26 30"><path d="M8.3 3 Q9.3 1.3 11 1.3 H15 Q16.7 1.3 17.6 3 H23.5 Q25.2 3 25.2 4.8 Q25.2 6.7 23.5 6.7 H2.4 Q0.7 6.7 0.7 4.8 Q0.7 3 2.4 3 Z" fill="#d01c2b"/><path d="M2.6 8.4 H23.2 L22.2 26.3 Q21.9 29.3 18.9 29.3 H7 Q4 29.3 3.7 26.3 Z" fill="#d01c2b"/></svg>
<div class="rowline" style="top:1230px"></div>
<div class="t" style="left:570.0px;top:1179.14px;font-size:27px;color:#454c55;font-weight:400;">Dohar Community Development Project</div>
<div class="t" style="left:1405px;top:1179.14px;font-size:27px;color:#454c55;font-weight:400;transform:scaleX(0.98);">0115</div>
<div class="t" style="left:1594px;top:1179.14px;font-size:27px;color:#454c55;font-weight:400;">Child Sponsorship Project</div>
<div class="t" style="left:2174.5px;top:1179.14px;font-size:27px;color:#454c55;font-weight:400;transform:scaleX(1.033);">01-Jan-2019</div>
<div class="t" style="left:2500.5px;top:1179.14px;font-size:27px;color:#454c55;font-weight:400;transform:scaleX(1.026);">31-Dec-2028</div>
<div class="t" style="left:2832.5px;top:1179.14px;font-size:27px;color:#454c55;font-weight:400;transform:scaleX(0.975);">In Progress</div>
<svg class="ic" style="left:3127px;top:1175px" width="34" height="30" viewBox="0 0 34 30"><path d="M4.3 5.1 H20 L16.6 8.6 H4.8 V25.8 H22.2 V21 L25.7 17.6 V26.3 Q25.7 29.3 22.7 29.3 H4.3 Q1.3 29.3 1.3 26.3 V8.1 Q1.3 5.1 4.3 5.1 Z" fill="#3a80b3"/><path d="M10.5 17.6 L22.7 6.2 L27.9 11.1 L16.2 23.3 L10.2 23.9 Z" fill="#3a80b3"/><path d="M24.6 4.3 L26.4 2.5 Q27.9 1.2 29.4 2.5 L32 5 Q33.3 6.4 32 7.8 L29.5 9.7 Z" fill="#3a80b3"/></svg>
<svg class="ic" style="left:3183px;top:1175px" width="26" height="30" viewBox="0 0 26 30"><path d="M8.3 3 Q9.3 1.3 11 1.3 H15 Q16.7 1.3 17.6 3 H23.5 Q25.2 3 25.2 4.8 Q25.2 6.7 23.5 6.7 H2.4 Q0.7 6.7 0.7 4.8 Q0.7 3 2.4 3 Z" fill="#d01c2b"/><path d="M2.6 8.4 H23.2 L22.2 26.3 Q21.9 29.3 18.9 29.3 H7 Q4 29.3 3.7 26.3 Z" fill="#d01c2b"/></svg>
<div class="rowline" style="top:1310px"></div>
<div class="t" style="left:570.0px;top:1259.14px;font-size:27px;color:#454c55;font-weight:400;">Kalai Community Development Project</div>
<div class="t" style="left:1405px;top:1259.14px;font-size:27px;color:#454c55;font-weight:400;transform:scaleX(0.98);">0120</div>
<div class="t" style="left:1594px;top:1259.14px;font-size:27px;color:#454c55;font-weight:400;">Child Sponsorship Project</div>
<div class="t" style="left:2174.5px;top:1259.14px;font-size:27px;color:#454c55;font-weight:400;transform:scaleX(1.033);">01-Jan-2019</div>
<div class="t" style="left:2500.5px;top:1259.14px;font-size:27px;color:#454c55;font-weight:400;transform:scaleX(1.026);">31-Dec-2028</div>
<div class="t" style="left:2832.5px;top:1259.14px;font-size:27px;color:#454c55;font-weight:400;transform:scaleX(0.975);">In Progress</div>
<svg class="ic" style="left:3127px;top:1255px" width="34" height="30" viewBox="0 0 34 30"><path d="M4.3 5.1 H20 L16.6 8.6 H4.8 V25.8 H22.2 V21 L25.7 17.6 V26.3 Q25.7 29.3 22.7 29.3 H4.3 Q1.3 29.3 1.3 26.3 V8.1 Q1.3 5.1 4.3 5.1 Z" fill="#3a80b3"/><path d="M10.5 17.6 L22.7 6.2 L27.9 11.1 L16.2 23.3 L10.2 23.9 Z" fill="#3a80b3"/><path d="M24.6 4.3 L26.4 2.5 Q27.9 1.2 29.4 2.5 L32 5 Q33.3 6.4 32 7.8 L29.5 9.7 Z" fill="#3a80b3"/></svg>
<svg class="ic" style="left:3183px;top:1255px" width="26" height="30" viewBox="0 0 26 30"><path d="M8.3 3 Q9.3 1.3 11 1.3 H15 Q16.7 1.3 17.6 3 H23.5 Q25.2 3 25.2 4.8 Q25.2 6.7 23.5 6.7 H2.4 Q0.7 6.7 0.7 4.8 Q0.7 3 2.4 3 Z" fill="#d01c2b"/><path d="M2.6 8.4 H23.2 L22.2 26.3 Q21.9 29.3 18.9 29.3 H7 Q4 29.3 3.7 26.3 Z" fill="#d01c2b"/></svg>
<div class="rowline" style="top:1390px"></div>
<div class="t" style="left:570.0px;top:1339.14px;font-size:27px;color:#454c55;font-weight:400;">Nilphamari Community Development Project</div>
<div class="t" style="left:1405px;top:1339.14px;font-size:27px;color:#454c55;font-weight:400;transform:scaleX(0.98);">0121</div>
<div class="t" style="left:1594px;top:1339.14px;font-size:27px;color:#454c55;font-weight:400;">Child Sponsorship Project</div>
<div class="t" style="left:2174.5px;top:1339.14px;font-size:27px;color:#454c55;font-weight:400;transform:scaleX(1.033);">01-Jan-2020</div>
<div class="t" style="left:2500.5px;top:1339.14px;font-size:27px;color:#454c55;font-weight:400;transform:scaleX(1.026);">31-Dec-2024</div>
<div class="t" style="left:2832.5px;top:1339.14px;font-size:27px;color:#454c55;font-weight:400;transform:scaleX(0.975);">In Progress</div>
<svg class="ic" style="left:3127px;top:1335px" width="34" height="30" viewBox="0 0 34 30"><path d="M4.3 5.1 H20 L16.6 8.6 H4.8 V25.8 H22.2 V21 L25.7 17.6 V26.3 Q25.7 29.3 22.7 29.3 H4.3 Q1.3 29.3 1.3 26.3 V8.1 Q1.3 5.1 4.3 5.1 Z" fill="#3a80b3"/><path d="M10.5 17.6 L22.7 6.2 L27.9 11.1 L16.2 23.3 L10.2 23.9 Z" fill="#3a80b3"/><path d="M24.6 4.3 L26.4 2.5 Q27.9 1.2 29.4 2.5 L32 5 Q33.3 6.4 32 7.8 L29.5 9.7 Z" fill="#3a80b3"/></svg>
<svg class="ic" style="left:3183px;top:1335px" width="26" height="30" viewBox="0 0 26 30"><path d="M8.3 3 Q9.3 1.3 11 1.3 H15 Q16.7 1.3 17.6 3 H23.5 Q25.2 3 25.2 4.8 Q25.2 6.7 23.5 6.7 H2.4 Q0.7 6.7 0.7 4.8 Q0.7 3 2.4 3 Z" fill="#d01c2b"/><path d="M2.6 8.4 H23.2 L22.2 26.3 Q21.9 29.3 18.9 29.3 H7 Q4 29.3 3.7 26.3 Z" fill="#d01c2b"/></svg>
<div class="rowline" style="top:1470px"></div>
<div class="t" style="left:570.0px;top:1419.14px;font-size:27px;color:#454c55;font-weight:400;">Bochaganj Community Development Project</div>
<div class="t" style="left:1405px;top:1419.14px;font-size:27px;color:#454c55;font-weight:400;transform:scaleX(0.98);">0122</div>
<div class="t" style="left:1594px;top:1419.14px;font-size:27px;color:#454c55;font-weight:400;">Child Sponsorship Project</div>
<div class="t" style="left:2174.5px;top:1419.14px;font-size:27px;color:#454c55;font-weight:400;transform:scaleX(1.033);">01-Jan-2019</div>
<div class="t" style="left:2500.5px;top:1419.14px;font-size:27px;color:#454c55;font-weight:400;transform:scaleX(1.026);">31-Dec-2028</div>
<div class="t" style="left:2832.5px;top:1419.14px;font-size:27px;color:#454c55;font-weight:400;transform:scaleX(0.975);">In Progress</div>
<svg class="ic" style="left:3127px;top:1415px" width="34" height="30" viewBox="0 0 34 30"><path d="M4.3 5.1 H20 L16.6 8.6 H4.8 V25.8 H22.2 V21 L25.7 17.6 V26.3 Q25.7 29.3 22.7 29.3 H4.3 Q1.3 29.3 1.3 26.3 V8.1 Q1.3 5.1 4.3 5.1 Z" fill="#3a80b3"/><path d="M10.5 17.6 L22.7 6.2 L27.9 11.1 L16.2 23.3 L10.2 23.9 Z" fill="#3a80b3"/><path d="M24.6 4.3 L26.4 2.5 Q27.9 1.2 29.4 2.5 L32 5 Q33.3 6.4 32 7.8 L29.5 9.7 Z" fill="#3a80b3"/></svg>
<svg class="ic" style="left:3183px;top:1415px" width="26" height="30" viewBox="0 0 26 30"><path d="M8.3 3 Q9.3 1.3 11 1.3 H15 Q16.7 1.3 17.6 3 H23.5 Q25.2 3 25.2 4.8 Q25.2 6.7 23.5 6.7 H2.4 Q0.7 6.7 0.7 4.8 Q0.7 3 2.4 3 Z" fill="#d01c2b"/><path d="M2.6 8.4 H23.2 L22.2 26.3 Q21.9 29.3 18.9 29.3 H7 Q4 29.3 3.7 26.3 Z" fill="#d01c2b"/></svg>
<div class="rowline" style="top:1550px"></div>
<div class="t" style="left:570.0px;top:1499.14px;font-size:27px;color:#454c55;font-weight:400;">Birganj Community Development Project</div>
<div class="t" style="left:1405px;top:1499.14px;font-size:27px;color:#454c55;font-weight:400;transform:scaleX(0.98);">0123</div>
<div class="t" style="left:1594px;top:1499.14px;font-size:27px;color:#454c55;font-weight:400;">Child Sponsorship Project</div>
<div class="t" style="left:2174.5px;top:1499.14px;font-size:27px;color:#454c55;font-weight:400;transform:scaleX(1.033);">01-Jan-2019</div>
<div class="t" style="left:2500.5px;top:1499.14px;font-size:27px;color:#454c55;font-weight:400;transform:scaleX(1.026);">31-Dec-2028</div>
<div class="t" style="left:2832.5px;top:1499.14px;font-size:27px;color:#454c55;font-weight:400;transform:scaleX(0.975);">In Progress</div>
<svg class="ic" style="left:3127px;top:1495px" width="34" height="30" viewBox="0 0 34 30"><path d="M4.3 5.1 H20 L16.6 8.6 H4.8 V25.8 H22.2 V21 L25.7 17.6 V26.3 Q25.7 29.3 22.7 29.3 H4.3 Q1.3 29.3 1.3 26.3 V8.1 Q1.3 5.1 4.3 5.1 Z" fill="#3a80b3"/><path d="M10.5 17.6 L22.7 6.2 L27.9 11.1 L16.2 23.3 L10.2 23.9 Z" fill="#3a80b3"/><path d="M24.6 4.3 L26.4 2.5 Q27.9 1.2 29.4 2.5 L32 5 Q33.3 6.4 32 7.8 L29.5 9.7 Z" fill="#3a80b3"/></svg>
<svg class="ic" style="left:3183px;top:1495px" width="26" height="30" viewBox="0 0 26 30"><path d="M8.3 3 Q9.3 1.3 11 1.3 H15 Q16.7 1.3 17.6 3 H23.5 Q25.2 3 25.2 4.8 Q25.2 6.7 23.5 6.7 H2.4 Q0.7 6.7 0.7 4.8 Q0.7 3 2.4 3 Z" fill="#d01c2b"/><path d="M2.6 8.4 H23.2 L22.2 26.3 Q21.9 29.3 18.9 29.3 H7 Q4 29.3 3.7 26.3 Z" fill="#d01c2b"/></svg>

</div>
</div>
<div class="t" style="left:567.8px;top:1554.01px;font-size:30px;color:#6b5b53;font-weight:400;transform:scaleX(0.9425);">Result Per Page :</div>

<div class="a" style="left:821px;top:1530.5px;width:150px;height:71px;border:2px solid #c5ccd8;border-radius:11px;background:#fff;"></div>
<div class="t" style="left:848.3px;top:1552.17px;font-size:33px;color:#212529;font-weight:400;transform:scaleX(0.9538);">25</div>

<svg class="ic" style="left:921px;top:1559px" width="25" height="18" viewBox="0 0 25 18"><path d="M3.2 4.2 L12.2 13.2 L21.2 4.2" fill="none" stroke="#212529" stroke-width="3.4" stroke-linecap="round" stroke-linejoin="round"/></svg>
<div class="a" style="left:1006.8px;top:1544.3px;width:279.2px;height:47.5px;border-radius:24px;background:#d2e3f3;"></div>
<div class="t" style="left:1028.0px;top:1554.75px;font-size:29px;color:#3a7bb5;font-weight:400;transform:scaleX(0.9958);">Total Showing : 27</div>

<!-- pagination -->
<svg class="ic" style="left:2834px;top:1555px" width="34" height="28" viewBox="0 0 34 28"><path d="M14 5.3 L6.3 13.4 L14 21.5 M27.5 5.3 L19.8 13.4 L27.5 21.5" fill="none" stroke="#a4a9ae" stroke-width="3.3" stroke-linecap="round" stroke-linejoin="round"/></svg>
<svg class="ic" style="left:2924px;top:1555px" width="22" height="28" viewBox="0 0 22 28"><path d="M15.5 5.3 L7.5 13.4 L15.5 21.5" fill="none" stroke="#a4a9ae" stroke-width="3.3" stroke-linecap="round" stroke-linejoin="round"/></svg>
<div class="a" style="left:2982px;top:1531px;width:76px;height:75px;border-radius:7px;background:#3a7ab7;"></div>
<svg class="ic" style="left:3008.5px;top:1554px" width="22" height="30" viewBox="0 0 22 30"><path d="M13.6 3 H16.2 V26.6 H13.2 V7.2 C11.5 8.8 9.3 9.6 5.6 9.8 V7.3 C9.5 7 12 5.6 13.6 3 Z" fill="#ffffff"/></svg>
<div class="t" style="left:3096.3px;top:1552.67px;font-size:33px;color:#6c757d;font-weight:400;">2</div>

<svg class="ic" style="left:3177px;top:1555px" width="22" height="28" viewBox="0 0 22 28"><path d="M7 5.3 L15 13.4 L7 21.5" fill="none" stroke="#6c757d" stroke-width="3.3" stroke-linecap="round" stroke-linejoin="round"/></svg>
<svg class="ic" style="left:3256px;top:1555px" width="34" height="28" viewBox="0 0 34 28"><path d="M7 5.3 L14.7 13.4 L7 21.5 M20.5 5.3 L28.2 13.4 L20.5 21.5" fill="none" stroke="#6c757d" stroke-width="3.3" stroke-linecap="round" stroke-linejoin="round"/></svg>

</body></html>
